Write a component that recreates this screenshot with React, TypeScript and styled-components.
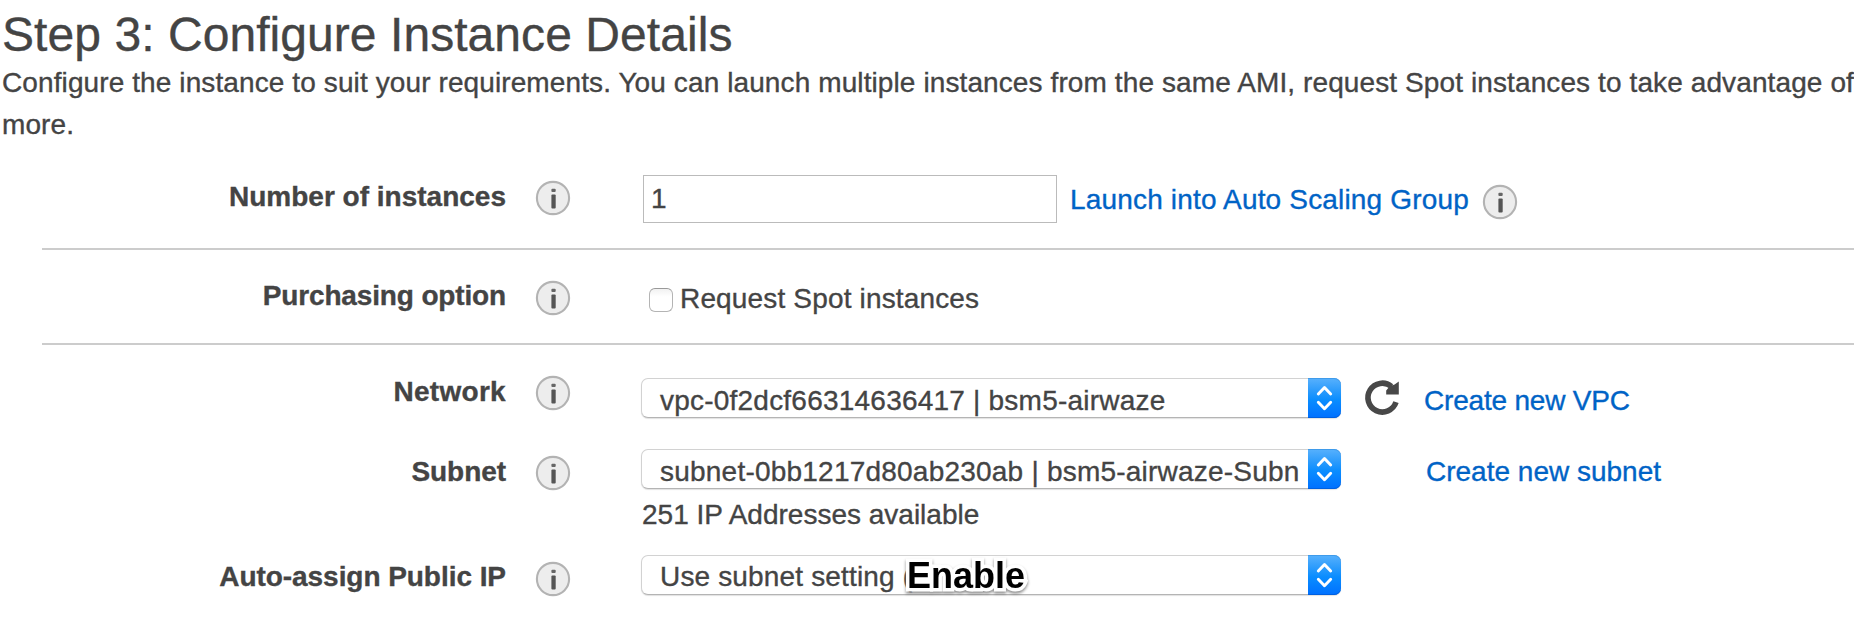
import React from 'react';
import styled, { createGlobalStyle } from 'styled-components';

const GlobalStyle = createGlobalStyle`
  *, *::before, *::after { box-sizing: border-box; }
  body {
    margin: 0;
    background: #fff;
    color: #444;
    font-family: "Liberation Sans", Arial, sans-serif;
    font-size: 28px;
    line-height: 32px;
    -webkit-text-stroke: 0.35px currentColor;
    overflow: hidden;
  }
`;

const Page = styled.main`
  width: 1854px;
  height: 620px;
  overflow: hidden;
  padding-top: 7px;
`;

const Title = styled.h1`
  margin: 0;
  padding-left: 2px;
  height: 55px;
  font-size: 48px;
  font-weight: 400;
  line-height: 56px;
  letter-spacing: 0.06px;
`;

const Intro = styled.p`
  margin: 0;
  padding-left: 2px;
  height: 98px;
  line-height: 42px;
  letter-spacing: 0.105px;
  white-space: nowrap;
`;

const Form = styled.form`
  margin-left: 42px;
`;

const Row = styled.div<{ $height: number; $divided?: boolean }>`
  display: grid;
  grid-template-columns: 465px 134px 1fr;
  align-items: start;
  height: ${(p) => p.$height}px;
  border-bottom: ${(p) => (p.$divided ? '2px solid #ccc' : 'none')};
`;

const Label = styled.label<{ $top: number; $spacing?: number }>`
  margin-top: ${(p) => p.$top}px;
  padding-right: 1px;
  font-weight: 700;
  text-align: right;
  white-space: nowrap;
  letter-spacing: ${(p) => p.$spacing ?? 0}px;
`;

const InfoSvg = styled.svg<{ $top: number; $left: number }>`
  display: block;
  flex: none;
  width: 36px;
  height: 36px;
  margin: ${(p) => p.$top}px 0 0 ${(p) => p.$left}px;
`;

const Controls = styled.div<{ $top: number }>`
  display: flex;
  align-items: flex-start;
  padding-top: ${(p) => p.$top}px;
  white-space: nowrap;
`;

const NumberInput = styled.input`
  width: 414px;
  height: 48px;
  margin-left: 2px;
  padding: 0 0 0 7px;
  border: 1px solid #bbb;
  border-radius: 0;
  outline: none;
  background: #fff;
  color: #444;
  font: inherit;
`;

const Link = styled.a<{ $left: number; $top: number; $spacing?: number }>`
  margin: ${(p) => p.$top}px 0 0 ${(p) => p.$left}px;
  color: #0063c6;
  text-decoration: none;
  letter-spacing: ${(p) => p.$spacing ?? 0}px;
`;

const Checkbox = styled.input`
  appearance: none;
  width: 24px;
  height: 24px;
  margin: 5px 7px 0 8px;
  border: 1px solid #b4b4b4;
  border-top-color: #999;
  border-radius: 6px;
  background: linear-gradient(#f1f1f1, #fff 35%);
`;

const CheckText = styled.span`
  letter-spacing: 0.16px;
`;

const SelectStack = styled.div`
  display: flex;
  flex-direction: column;
`;

const SelectBox = styled.div`
  position: relative;
  display: flex;
  width: 700px;
  height: 40px;
  border: 1px solid #d2d2d2;
  border-bottom: 1px solid #b4b4b4;
  border-radius: 7px;
  background: #fff;
  box-shadow: 0 1px 1px rgba(0, 0, 0, 0.12);
`;

const SelectValue = styled.span<{ $top: number; $spacing?: number }>`
  flex: 1;
  margin-top: ${(p) => p.$top}px;
  padding-left: 18px;
  letter-spacing: ${(p) => p.$spacing ?? 0.22}px;
`;

const Stepper = styled.span`
  flex: none;
  width: 33px;
  height: 40px;
  margin: -1px -1px 0 0;
  border-radius: 0 7px 7px 0;
  background: linear-gradient(#58b1fd 0%, #2b9bfc 32%, #0a8dff 55%, #0070ff 100%);
  box-shadow: inset 0 1px 0 #3f9bea, inset 0 -1px 0 #0060e0;

  svg { display: block; }
`;

const Hint = styled.div`
  margin-top: 10px;
  padding-left: 1px;
`;

const RefreshSvg = styled.svg`
  display: block;
  flex: none;
  width: 40px;
  height: 40px;
  margin-left: 21px;
`;

const Callout = styled.span`
  position: absolute;
  top: -1px;
  left: 265px;
  color: #000;
  font-size: 36px;
  font-weight: 700;
  line-height: 42px;
  -webkit-text-stroke: 7px #fff;
  paint-order: stroke fill;
  filter: drop-shadow(0 2px 1.5px rgba(0, 0, 0, 0.45));
`;

function InfoIcon({ top, left = 28 }: { top: number; left?: number }) {
  return (
    <InfoSvg $top={top} $left={left} viewBox="0 0 36 36" aria-label="info">
      <circle cx="18" cy="18" r="16.1" fill="#ededed" stroke="#b3b3b3" strokeWidth="2.1" />
      <rect x="16.4" y="8.8" width="4.3" height="3.3" rx="1" fill="#666" />
      <rect x="16.4" y="14.4" width="4.3" height="14" rx="1" fill="#555" />
    </InfoSvg>
  );
}

function Select({ value, top, spacing, children }: { value: string; top: number; spacing?: number; children?: React.ReactNode }) {
  return (
    <SelectBox>
      <SelectValue $top={top} $spacing={spacing}>{value}</SelectValue>
      <Stepper>
        <svg width="33" height="40" viewBox="0 0 33 40" fill="none" stroke="#fff" strokeWidth="2.9" strokeLinecap="round" strokeLinejoin="round">
          <path d="M10.3 16 16.5 9.5 22.7 16M10.3 24.2 16.5 30.7 22.7 24.2" />
        </svg>
      </Stepper>
      {children}
    </SelectBox>
  );
}

export default function App() {
  return (
    <>
      <GlobalStyle />
      <Page>
        <Title>Step 3: Configure Instance Details</Title>
        <Intro>
          Configure the instance to suit your requirements. You can launch multiple instances from the same AMI, request Spot instances to take advantage of
          <br />
          more.
        </Intro>
        <Form>
          <Row $height={90} $divided>
            <Label $top={21}>Number of instances</Label>
            <InfoIcon top={20} />
            <Controls $top={15}>
              <NumberInput defaultValue="1" />
              <Link href="#" $left={13} $top={9} $spacing={0.17}>Launch into Auto Scaling Group</Link>
              <InfoIcon top={9} left={13} />
            </Controls>
          </Row>
          <Row $height={95} $divided>
            <Label $top={30} $spacing={-0.15}>Purchasing option</Label>
            <InfoIcon top={30} />
            <Controls $top={33}>
              <Checkbox type="checkbox" />
              <CheckText>Request Spot instances</CheckText>
            </Controls>
          </Row>
          <Row $height={87}>
            <Label $top={31} $spacing={0.3}>Network</Label>
            <InfoIcon top={30} />
            <Controls $top={33}>
              <Select value="vpc-0f2dcf66314636417 | bsm5-airwaze" top={6} />
              <RefreshSvg viewBox="0 0 40 40" aria-label="refresh">
                <path d="M34 24.2A14.4 14.4 0 1 1 29.4 8.4" fill="none" stroke="#484848" strokeWidth="5.6" />
                <path d="M36.8 3.4V16.4H24.2V12.4L28 8L32.6 6.6Z" fill="#484848" />
              </RefreshSvg>
              <Link href="#" $left={22} $top={7} $spacing={-0.19}>Create new VPC</Link>
            </Controls>
          </Row>
          <Row $height={108}>
            <Label $top={24} $spacing={-0.05}>Subnet</Label>
            <InfoIcon top={23} />
            <Controls $top={17}>
              <SelectStack>
                <Select value="subnet-0bb1217d80ab230ab | bsm5-airwaze-Subn" top={6} />
                <Hint>251 IP Addresses available</Hint>
              </SelectStack>
              <Link href="#" $left={85} $top={7}>Create new subnet</Link>
            </Controls>
          </Row>
          <Row $height={80}>
            <Label $top={21} $spacing={-0.05}>Auto-assign Public IP</Label>
            <InfoIcon top={21} />
            <Controls $top={15}>
              <Select value="Use subnet setting (" top={5} spacing={0.16}>
                <Callout>Enable</Callout>
              </Select>
            </Controls>
          </Row>
        </Form>
      </Page>
    </>
  );
}
